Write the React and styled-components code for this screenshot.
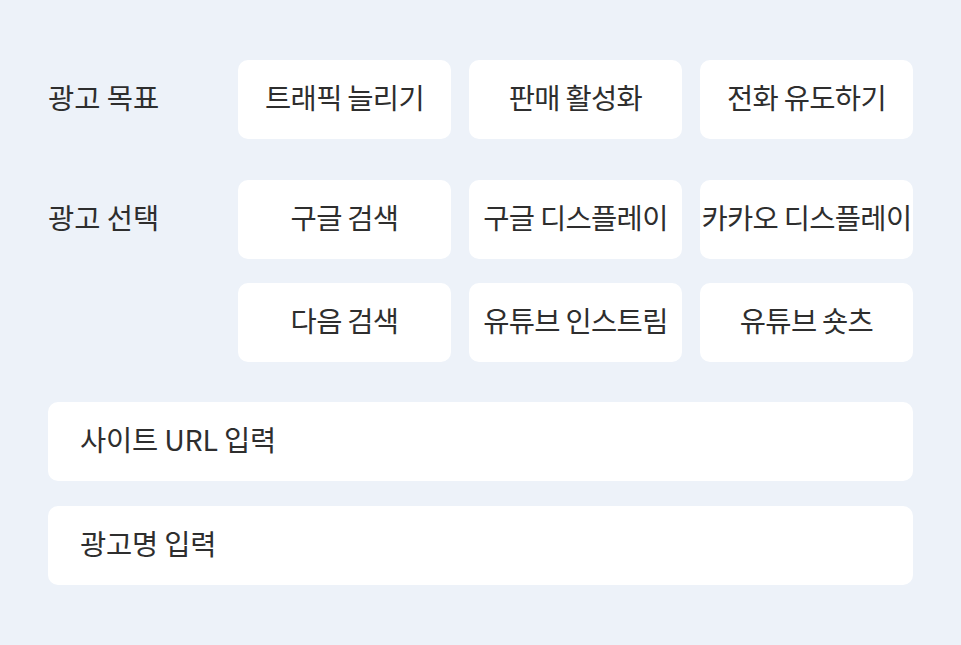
import React from 'react'
import styled, {createGlobalStyle} from 'styled-components'

const GlobalStyle = createGlobalStyle`
  html, body {
    margin: 0;
    padding: 0;
    background: #edf2f9;
  }
  body {
    font-family: "Noto Sans CJK KR", "Noto Sans", sans-serif;
    color: #2e2e2e;
  }
`;

const Page = styled('div')`
  width: 961px;
  height: 645px;
  box-sizing: border-box;
  padding: 60px 48px 60px 48px;
  display: flex;
  flex-direction: column;
`;

const Section = styled('div')`
  display: flex;
  margin-bottom: ${props => props.mb}px;
`;

const Label = styled('div')`
  width: 190px;
  flex-shrink: 0;
  height: 79px;
  display: flex;
  align-items: center;
  font-size: 28.5px;
  padding-bottom: 7px;
  box-sizing: border-box;
`;

const OptionGrid = styled('div')`
  display: grid;
  grid-template-columns: repeat(3, 213px);
  column-gap: 18px;
  row-gap: 24px;
`;

const Option = styled('div')`
  height: 79px;
  box-sizing: border-box;
  padding-bottom: 7px;
  background: #fff;
  border-radius: 10px;
  display: flex;
  align-items: center;
  justify-content: center;
  font-size: 28.5px;
  letter-spacing: -0.7px;
  white-space: nowrap;
`;

const Input = styled('div')`
  height: 79px;
  box-sizing: border-box;
  background: #fff;
  border-radius: 10px;
  display: flex;
  align-items: center;
  padding: 0 0 7px 32px;
  font-size: 28.5px;
  letter-spacing: -0.2px;
  margin-bottom: ${props => props.mb || 0}px;
`;

const goals = ['트래픽 늘리기', '판매 활성화', '전화 유도하기'];
const channels = ['구글 검색', '구글 디스플레이', '카카오 디스플레이', '다음 검색', '유튜브 인스트림', '유튜브 숏츠'];

const App = () => {
    return (
        <>
            <GlobalStyle/>
            <Page>
                <Section mb={41}>
                    <Label>광고 목표</Label>
                    <OptionGrid>
                        {goals.map(g => <Option key={g}>{g}</Option>)}
                    </OptionGrid>
                </Section>
                <Section mb={40}>
                    <Label>광고 선택</Label>
                    <OptionGrid>
                        {channels.map(c => <Option key={c}>{c}</Option>)}
                    </OptionGrid>
                </Section>
                <Input mb={25}>사이트 URL 입력</Input>
                <Input>광고명 입력</Input>
            </Page>
        </>
    )
}

export default App
